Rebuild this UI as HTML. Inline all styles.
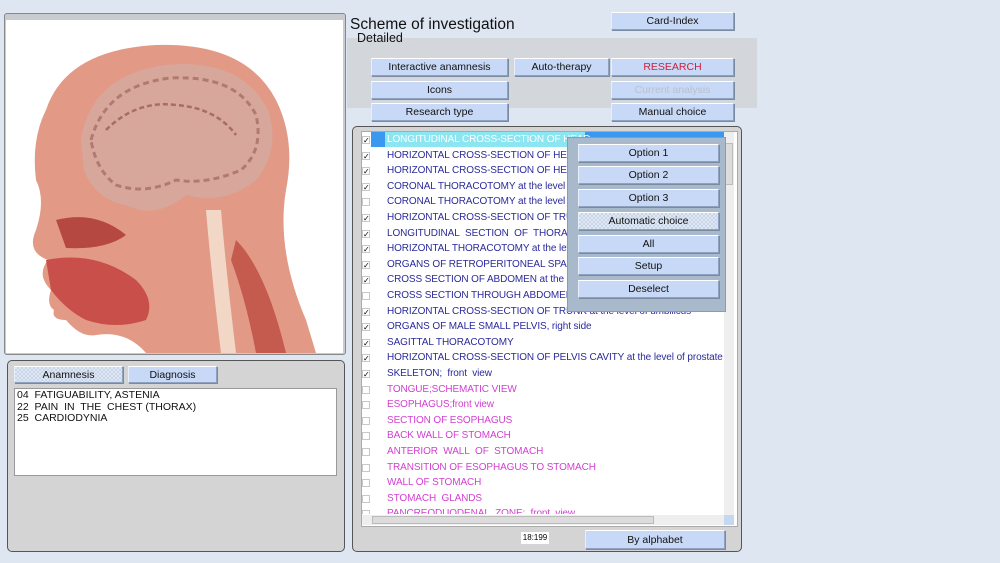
<!DOCTYPE html>
<html><head><meta charset="utf-8"><style>
*{margin:0;padding:0;box-sizing:border-box}
body{width:1000px;height:563px;background:#dde6f1;position:relative;overflow:hidden;font-family:"Liberation Sans",sans-serif;font-size:10px}
.a{position:absolute}
.btn{position:absolute;background:#c7d9f6;border:1px solid #8ea2bf;border-top-color:#fff;border-left-color:#e8effa;box-shadow:1px 1px 0 #7a8aa0;text-align:center;font-size:10.5px;line-height:16px;color:#111}
.chk{background-color:#dfe7f3;background-image:linear-gradient(45deg,#c9d6ea 25%,transparent 25%,transparent 75%,#c9d6ea 75%),linear-gradient(45deg,#c9d6ea 25%,transparent 25%,transparent 75%,#c9d6ea 75%);background-size:4px 4px;background-position:0 0,2px 2px}
.row{position:absolute;left:362px;height:15px;font-size:10px;line-height:15px;white-space:nowrap;letter-spacing:-0.1px}
.row i{position:absolute;left:0;top:4px;width:8px;height:8px;border:1px solid #c8c8c8;background:#fff;font-style:normal;font-size:8px;line-height:7px;text-align:center;color:#000;overflow:hidden}
.row span{position:absolute;left:25px}
.b{color:#2a2a9c}.p{color:#d23fd2}
</style></head><body>
<div class="a" style="left:4px;top:13px;width:342px;height:342px;background:#c8ccd0;border:1px solid #888;border-radius:3px"></div>
<div class="a" style="left:6px;top:20px;width:337px;height:333px;background:#fff;overflow:hidden">
<svg width="337" height="333" viewBox="0 0 337 333">
<path d="M40 90 Q60 30 150 25 Q240 22 270 80 Q290 120 280 170 Q270 230 300 300 L310 333 L140 333 Q120 310 90 315 Q75 318 60 300 Q45 300 48 290 Q40 285 45 270 Q30 255 42 240 Q20 232 30 210 Q40 180 30 160 Q25 120 40 90Z" fill="#e29a86"/>
<path d="M75 120 Q85 55 160 45 Q235 38 262 90 Q275 130 250 160 Q220 185 180 175 Q150 200 120 185 Q90 180 78 150Z" fill="#d8a79c"/>
<path d="M85 120 Q100 65 165 58 Q230 55 250 95 Q258 130 235 150 Q200 165 170 160 Q140 175 110 165 Q90 150 85 120Z" fill="none" stroke="#b07a70" stroke-width="3" stroke-dasharray="6 4"/>
<path d="M100 110 Q130 80 170 85 Q210 88 230 115" fill="none" stroke="#a86c62" stroke-width="2.5" stroke-dasharray="5 3"/>
<path d="M200 190 Q205 250 215 333 L230 333 Q220 250 215 190Z" fill="#f2d7c7"/>
<path d="M40 240 Q90 230 130 260 Q150 280 140 300 Q110 310 80 300 Q60 290 45 270Z" fill="#c9504a"/>
<path d="M50 200 Q90 190 120 215 Q100 230 60 228Z" fill="#b54840"/>
<path d="M230 220 Q260 250 280 333 L250 333 Q240 280 225 240Z" fill="#c55a4e"/>
</svg></div>
<div class="a" style="left:7px;top:360px;width:338px;height:192px;background:#d4d4d4;border:1px solid #555;border-radius:5px"></div>
<div class="btn chk" style="left:14px;top:366px;width:109px;height:17px">Anamnesis</div>
<div class="btn" style="left:128px;top:366px;width:89px;height:17px">Diagnosis</div>
<div class="a" style="left:14px;top:388px;width:323px;height:88px;background:#fff;border:1px solid #999;font-size:10.5px;line-height:11.5px;padding:1px 2px;color:#111">04&nbsp; FATIGUABILITY, ASTENIA<br>22&nbsp; PAIN&nbsp; IN&nbsp; THE&nbsp; CHEST (THORAX)<br>25&nbsp; CARDIODYNIA</div>
<div class="a" style="left:350px;top:16px;font-size:15.5px;color:#111">Scheme of investigation</div>
<div class="a" style="left:347px;top:38px;width:410px;height:70px;background:#d3d7dc"></div>
<div class="a" style="left:357px;top:31px;font-size:12.5px;color:#111">Detailed</div>
<div class="btn" style="left:611px;top:12px;width:123px;height:18px">Card-Index</div>
<div class="btn" style="left:371px;top:58px;width:137px;height:18px">Interactive anamnesis</div>
<div class="btn" style="left:514px;top:58px;width:95px;height:18px">Auto-therapy</div>
<div class="btn" style="left:611px;top:58px;width:123px;height:18px;color:#d0203c">RESEARCH</div>
<div class="btn" style="left:371px;top:81px;width:137px;height:18px">Icons</div>
<div class="btn" style="left:611px;top:81px;width:123px;height:18px;color:#b8c0cc">Current analysis</div>
<div class="btn" style="left:371px;top:103px;width:137px;height:18px">Research type</div>
<div class="btn" style="left:611px;top:103px;width:123px;height:18px">Manual choice</div>
<div class="a" style="left:352px;top:126px;width:390px;height:426px;background:#d4d4d4;border:1px solid #555;border-radius:5px"></div>
<div class="a" style="left:361px;top:131px;width:377px;height:396px;background:#fff;border:1px solid #aaa"></div>
<div class="a" style="left:371px;top:132px;width:353px;height:15px;background:#3a98f0"></div>
<div class="a" style="left:385px;top:132px;width:200px;height:15px;background:#8ce6f2"></div>
<div class="row" style="top:132px"><i>✓</i><span style="color:#fff">LONGITUDINAL CROSS-SECTION OF HEAD</span></div>
<div class="row" style="top:147.6px"><i>✓</i><span class="b">HORIZONTAL CROSS-SECTION OF HEAD</span></div>
<div class="row" style="top:163.2px"><i>✓</i><span class="b">HORIZONTAL CROSS-SECTION OF HEAD</span></div>
<div class="row" style="top:178.8px"><i>✓</i><span class="b">CORONAL THORACOTOMY at the level</span></div>
<div class="row" style="top:194.4px"><i></i><span class="b">CORONAL THORACOTOMY at the level</span></div>
<div class="row" style="top:210px"><i>✓</i><span class="b">HORIZONTAL CROSS-SECTION OF TRUNK</span></div>
<div class="row" style="top:225.6px"><i>✓</i><span class="b">LONGITUDINAL&nbsp; SECTION&nbsp; OF&nbsp; THORAX</span></div>
<div class="row" style="top:241.2px"><i>✓</i><span class="b">HORIZONTAL THORACOTOMY at the level</span></div>
<div class="row" style="top:256.8px"><i>✓</i><span class="b">ORGANS OF RETROPERITONEAL SPACE</span></div>
<div class="row" style="top:272.4px"><i>✓</i><span class="b">CROSS SECTION OF ABDOMEN at the level</span></div>
<div class="row" style="top:288px"><i></i><span class="b">CROSS SECTION THROUGH ABDOMEN</span></div>
<div class="row" style="top:303.6px"><i>✓</i><span class="b">HORIZONTAL CROSS-SECTION OF TRUNK at the level of umbilicus</span></div>
<div class="row" style="top:319.2px"><i>✓</i><span class="b">ORGANS OF MALE SMALL PELVIS, right side</span></div>
<div class="row" style="top:334.8px"><i>✓</i><span class="b">SAGITTAL THORACOTOMY</span></div>
<div class="row" style="top:350.4px"><i>✓</i><span class="b">HORIZONTAL CROSS-SECTION OF PELVIS CAVITY at the level of prostate</span></div>
<div class="row" style="top:366px"><i>✓</i><span class="b">SKELETON;&nbsp; front&nbsp; view</span></div>
<div class="row" style="top:381.6px"><i></i><span class="p">TONGUE;SCHEMATIC VIEW</span></div>
<div class="row" style="top:397.2px"><i></i><span class="p">ESOPHAGUS;front view</span></div>
<div class="row" style="top:412.8px"><i></i><span class="p">SECTION OF ESOPHAGUS</span></div>
<div class="row" style="top:428.4px"><i></i><span class="p">BACK WALL OF STOMACH</span></div>
<div class="row" style="top:444px"><i></i><span class="p">ANTERIOR&nbsp; WALL&nbsp; OF&nbsp; STOMACH</span></div>
<div class="row" style="top:459.6px"><i></i><span class="p">TRANSITION OF ESOPHAGUS TO STOMACH</span></div>
<div class="row" style="top:475.2px"><i></i><span class="p">WALL OF STOMACH</span></div>
<div class="row" style="top:490.8px"><i></i><span class="p">STOMACH&nbsp; GLANDS</span></div>
<div class="a" style="left:362px;top:506px;width:362px;height:8px;overflow:hidden"><div class="row" style="left:0;top:0"><i></i><span class="p">PANCREODUODENAL&nbsp; ZONE;&nbsp; front&nbsp; view</span></div></div>
<div class="a" style="left:724px;top:132px;width:10px;height:383px;background:#eee"></div>
<div class="a" style="left:725px;top:143px;width:8px;height:42px;background:#dcdcdc;border:1px solid #bbb"></div>
<div class="a" style="left:362px;top:515px;width:362px;height:10px;background:#eee"></div>
<div class="a" style="left:372px;top:516px;width:282px;height:8px;background:#dcdcdc;border:1px solid #bbb"></div>
<div class="a" style="left:724px;top:515px;width:10px;height:10px;background:#c5d8f2"></div>
<div class="a" style="left:567px;top:137px;width:159px;height:175px;background:#a9b9cc;border:1px solid #8c9cb0"></div>
<div class="btn" style="left:578px;top:144px;width:141px;height:18px">Option 1</div>
<div class="btn" style="left:578px;top:166px;width:141px;height:18px">Option 2</div>
<div class="btn" style="left:578px;top:189px;width:141px;height:18px">Option 3</div>
<div class="btn chk" style="left:578px;top:212px;width:141px;height:18px">Automatic choice</div>
<div class="btn" style="left:578px;top:235px;width:141px;height:18px">All</div>
<div class="btn" style="left:578px;top:257px;width:141px;height:18px">Setup</div>
<div class="btn" style="left:578px;top:280px;width:141px;height:18px">Deselect</div>
<div class="a" style="left:521px;top:532px;width:28px;height:12px;background:#fff;font-size:8px;line-height:12px;text-align:center">18:199</div>
<div class="btn" style="left:585px;top:530px;width:140px;height:19px;line-height:18px">By alphabet</div>
</body></html>
